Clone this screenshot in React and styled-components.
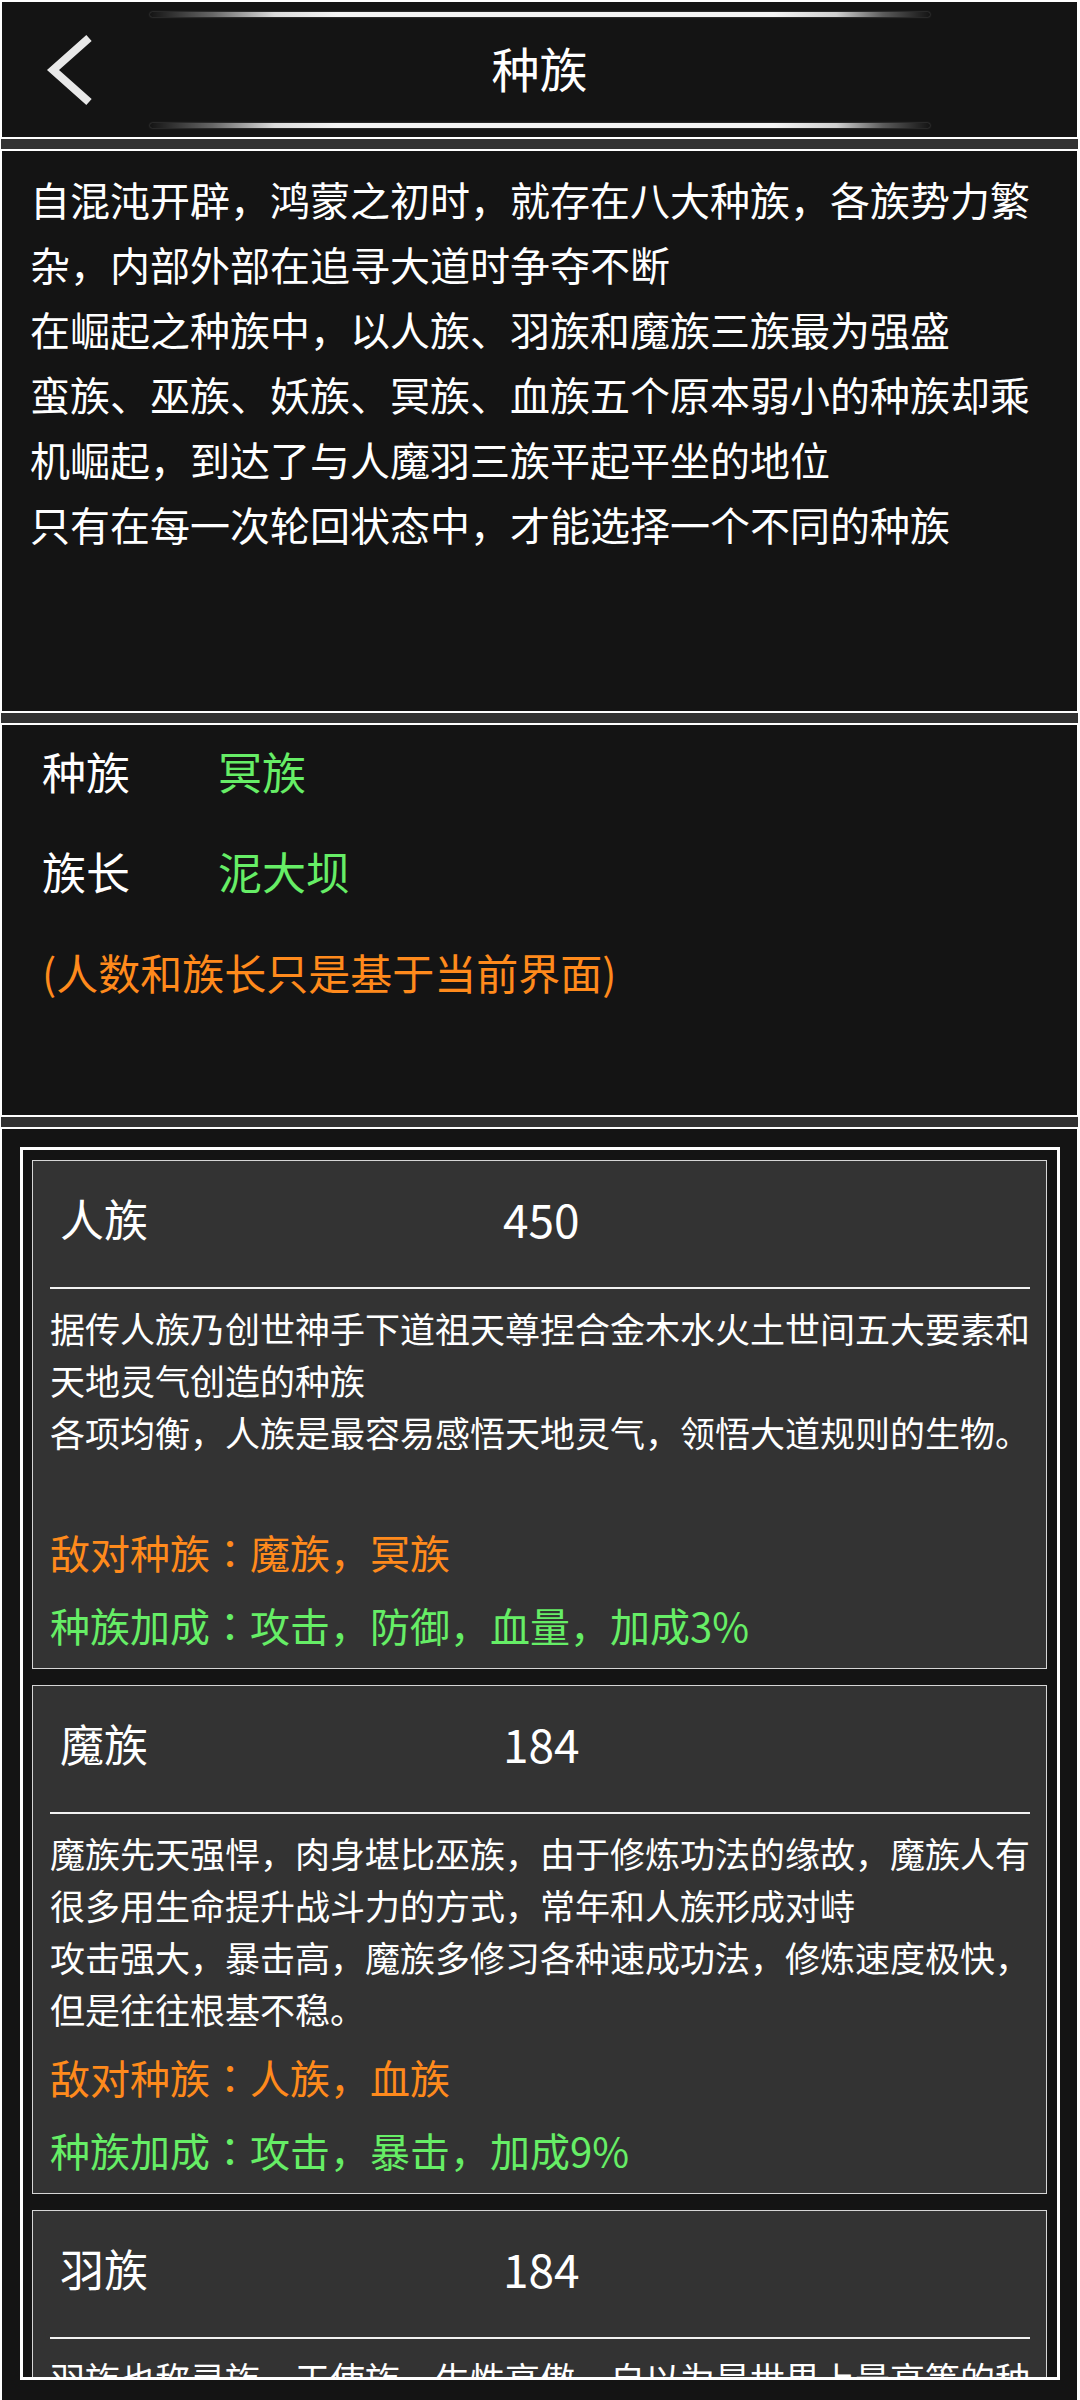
import React from 'react';
import styled, { createGlobalStyle } from 'styled-components';

const GlobalStyle = createGlobalStyle`
    html, body {
        margin: 0;
        padding: 0;
        background: #ffffff;
    }
    body {
        font-family: "Noto Sans CJK SC", "Noto Sans", sans-serif;
    }
`;

const Page = styled.div`
    width: 1080px;
    height: 2400px;
    box-sizing: border-box;
    padding: 2px 3px 0 2px;
    display: flex;
    flex-direction: column;
    overflow: hidden;
    background: #ffffff;
`;

const Header = styled.div`
    height: 135px;
    flex: none;
    box-sizing: border-box;
    padding: 10px 0 9px;
    background: #141414;
    display: flex;
    flex-direction: column;
    align-items: center;
`;

const GlowLine = styled.div`
    width: 780px;
    height: 5px;
    flex: none;
    border-radius: 3px;
    background: linear-gradient(90deg,
        rgba(255, 255, 255, 0) 0%,
        rgba(255, 255, 255, 0.35) 8%,
        rgba(255, 255, 255, 0.85) 16%,
        #f4f4f4 24%,
        #f4f4f4 80%,
        rgba(255, 255, 255, 0.8) 88%,
        rgba(255, 255, 255, 0.3) 94%,
        rgba(255, 255, 255, 0) 100%);
    box-shadow: 0 0 2px rgba(255, 255, 255, 0.35);
`;

const TitleBar = styled.div`
    flex: 1;
    align-self: stretch;
    display: grid;
    grid-template-columns: 150px 1fr 150px;
    align-items: center;
`;

const BackButton = styled.div`
    padding-left: 38px;
    display: flex;
    align-items: center;
`;

const Title = styled.h1`
    margin: 0;
    padding-bottom: 6px;
    text-align: center;
    font-size: 48px;
    font-weight: 400;
    color: #ffffff;
    line-height: 1;
`;

const Strip = styled.div`
    height: 10px;
    flex: none;
    margin: 2px -1px;
    background: #333333;
`;

const Panel = styled.div`
    flex: none;
    box-sizing: border-box;
    background: #141414;
`;

const IntroPanel = styled(Panel)`
    height: 560px;
    padding: 16px 28px;
    color: #ffffff;
    font-size: 40px;
    line-height: 65px;
    white-space: pre-line;
`;

const InfoPanel = styled(Panel)`
    height: 390px;
    padding: 0 40px;
`;

const InfoRow = styled.div`
    display: flex;
    height: 100px;
    box-sizing: border-box;
    padding-bottom: 8px;
    align-items: center;
    font-size: 44px;
`;

const InfoLabel = styled.span`
    width: 176px;
    color: #ffffff;
`;

const InfoValue = styled.span`
    color: #66ee66;
`;

const Note = styled.div`
    height: 100px;
    box-sizing: border-box;
    padding-bottom: 8px;
    display: flex;
    align-items: center;
    font-size: 42px;
    color: #ff8a1c;
`;

const ListPanel = styled(Panel)`
    flex: 1;
    padding: 18px 17px 0 18px;
`;

const Frame = styled.div`
    height: 1233px;
    box-sizing: border-box;
    border: 3px solid #ffffff;
    padding: 10px 10px 0 9px;
    overflow: hidden;
    display: flex;
    flex-direction: column;
    gap: 16px;
`;

const Card = styled.div`
    flex: none;
    border: 1px solid #d6d6d6;
    background: #333333;
    padding: 0 16px 12px 17px;
`;

const CardHead = styled.div`
    height: 114px;
    display: flex;
    align-items: center;
    padding-left: 10px;
    color: #ffffff;
`;

const RaceName = styled.span`
    width: 443px;
    font-size: 44px;
`;

const RaceCount = styled.span`
    font-size: 46px;
`;

const Rule = styled.div`
    height: 2px;
    margin-top: 12px;
    background: #f2f2f2;
`;

const Desc = styled.div`
    margin-top: 13px;
    min-height: ${p => p.minLines * 52}px;
    font-size: 35px;
    line-height: 52px;
    color: #ffffff;
    white-space: pre-line;
`;

const StatLine = styled.div`
    margin-top: 12px;
    font-size: 40px;
    line-height: 61px;
    color: ${p => p.tone === 'enemy' ? '#ff8a1c' : '#66ee66'};
`;

// full-width colon centred in its cell, as in the game font
const Colon = styled.span`
    font-family: "Noto Sans CJK TC", "Noto Sans CJK SC", sans-serif;
`;

const BackIcon = () => (
    <svg width="60" height="80" viewBox="0 0 60 80">
        <path d="M49 8 L13 40 L49 72" fill="none" stroke="#e8e8e8" strokeWidth="8" strokeLinejoin="miter" />
    </svg>
);

const intro = `自混沌开辟，鸿蒙之初时，就存在八大种族，各族势力繁杂，内部外部在追寻大道时争夺不断
在崛起之种族中，以人族、羽族和魔族三族最为强盛
蛮族、巫族、妖族、冥族、血族五个原本弱小的种族却乘机崛起，到达了与人魔羽三族平起平坐的地位
只有在每一次轮回状态中，才能选择一个不同的种族`;

const races = [
    {
        name: '人族',
        count: 450,
        desc: '据传人族乃创世神手下道祖天尊捏合金木水火土世间五大要素和天地灵气创造的种族\n各项均衡，人族是最容易感悟天地灵气，领悟大道规则的生物。',
        lines: 4,
        enemy: '魔族，冥族',
        bonus: '攻击，防御，血量，加成3%'
    },
    {
        name: '魔族',
        count: 184,
        desc: '魔族先天强悍，肉身堪比巫族，由于修炼功法的缘故，魔族人有很多用生命提升战斗力的方式，常年和人族形成对峙\n攻击强大，暴击高，魔族多修习各种速成功法，修炼速度极快，但是往往根基不稳。',
        lines: 4,
        enemy: '人族，血族',
        bonus: '攻击，暴击，加成9%'
    },
    {
        name: '羽族',
        count: 184,
        desc: '羽族也称灵族，天使族，生性高傲，自以为是世界上最高等的种族，不屑与其他种族为伍\n身法灵动，闪避极高，羽族擅长远程攻击。',
        lines: 3,
        enemy: '妖族，蛮族',
        bonus: '闪避，速度，加成6%'
    }
];

export default function App() {
    return (
        <Page>
            <GlobalStyle />
            <Header>
                <GlowLine />
                <TitleBar>
                    <BackButton><BackIcon /></BackButton>
                    <Title>种族</Title>
                    <div />
                </TitleBar>
                <GlowLine />
            </Header>
            <Strip />
            <IntroPanel>{intro}</IntroPanel>
            <Strip />
            <InfoPanel>
                <InfoRow>
                    <InfoLabel>种族</InfoLabel>
                    <InfoValue>冥族</InfoValue>
                </InfoRow>
                <InfoRow>
                    <InfoLabel>族长</InfoLabel>
                    <InfoValue>泥大坝</InfoValue>
                </InfoRow>
                <Note>(人数和族长只是基于当前界面)</Note>
            </InfoPanel>
            <Strip />
            <ListPanel>
                <Frame>
                    {races.map((race, index) => (
                        <Card key={index}>
                            <CardHead>
                                <RaceName>{race.name}</RaceName>
                                <RaceCount>{race.count}</RaceCount>
                            </CardHead>
                            <Rule />
                            <Desc minLines={race.lines}>{race.desc}</Desc>
                            <StatLine tone="enemy">敌对种族<Colon>：</Colon>{race.enemy}</StatLine>
                            <StatLine tone="bonus">种族加成<Colon>：</Colon>{race.bonus}</StatLine>
                        </Card>
                    ))}
                </Frame>
            </ListPanel>
        </Page>
    );
}
